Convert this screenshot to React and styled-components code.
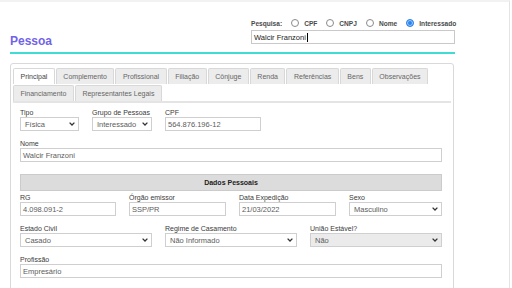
import React from 'react';
import styled, { createGlobalStyle } from 'styled-components';

const GlobalStyle = createGlobalStyle`
  html, body { margin: 0; padding: 0; background: #fff; }
  body { font-family: "Liberation Sans", Arial, sans-serif; color: #333; }
  *, *::before, *::after { box-sizing: border-box; }
`;

const Frame = styled.div`
  width: 510px;
  height: 288px;
  overflow: hidden;
  border-top: 2px solid #f2f2f2;
  border-right: 1px solid #e4e4e4;
  padding-left: 10px;
`;

const Content = styled.div`
  width: 445px;
`;

const Header = styled.header`
  display: flex;
  justify-content: space-between;
  align-items: flex-start;
  height: 52px;
  border-bottom: 2px solid #3fdcd6;
`;

const Title = styled.h1`
  align-self: flex-end;
  margin: 0 0 4px 0;
  font-size: 12px;
  line-height: 14px;
  font-weight: bold;
  color: #7163e8;
`;

const SearchBlock = styled.div`
  width: 204px;
  margin-top: 15px;
  display: flex;
  flex-direction: column;
  gap: 1px;
`;

const RadioRow = styled.div`
  display: flex;
  align-items: center;
  height: 12px;
  font-size: 6.6px;
  font-weight: bold;
  color: #4a4a4a;
`;

const RadioItem = styled.span`
  display: flex;
  align-items: center;
  gap: 5px;
  margin-left: 9px;
`;

const Circle = styled.span`
  width: 8px;
  height: 8px;
  border-radius: 50%;
  border: 1px solid ${p => (p.$checked ? '#2a83ef' : '#8a8a8a')};
  background: ${p => (p.$checked ? '#2a83ef' : '#fff')};
  box-shadow: ${p => (p.$checked ? 'inset 0 0 0 1px #a8cdf7' : 'none')};
`;

const SearchInput = styled.div`
  height: 14px;
  border: 1px solid #c9c9c9;
  padding-left: 2px;
  display: flex;
  align-items: center;
  font-size: 7.5px;
  color: #222;
`;

const Caret = styled.span`
  width: 1px;
  height: 9px;
  background: #000;
  margin-left: 1px;
`;

const Panel = styled.section`
  margin-top: 9px;
  width: 444px;
  min-height: 240px;
  border: 1px solid #d9d9d9;
  border-radius: 3px;
  padding: 4px 2px 0 2px;
`;

const TabStrip = styled.nav`
  display: flex;
  flex-wrap: wrap;
  row-gap: 1px;
  column-gap: 1px;
  border-bottom: 2px solid #e4e4e4;
`;

const Tab = styled.div`
  height: 16px;
  padding: 0 6.5px;
  display: flex;
  align-items: center;
  font-size: 7px;
  color: ${p => (p.$active ? '#444' : '#666')};
  background: ${p => (p.$active ? '#fff' : '#ececec')};
  border: 1px solid #d8d8d8;
  border-bottom: none;
  border-radius: 2px 2px 0 0;
  white-space: nowrap;
`;

const Form = styled.div`
  padding: 5px 9px 0 7px;
  display: flex;
  flex-direction: column;
`;

const Row = styled.div`
  display: grid;
  grid-template-columns: ${p => p.$cols};
  column-gap: 13px;
  margin-top: ${p => p.$mt || 0}px;
`;

const Field = styled.div`
  display: flex;
  flex-direction: column;
  min-width: 0;
`;

const Label = styled.label`
  font-size: 7px;
  line-height: 9px;
  height: 9px;
  color: #3a3a3a;
  white-space: nowrap;
`;

const Box = styled.div`
  height: 14px;
  border: 1px solid #cfcfcf;
  background: ${p => (p.$disabled ? '#ebebeb' : '#fff')};
  display: flex;
  align-items: center;
  justify-content: space-between;
  padding: 0 3px 0 ${p => (p.$select ? 4 : 2)}px;
  font-size: 7.5px;
  color: #5c5c5c;
  white-space: nowrap;
  overflow: hidden;
`;

const SectionHeader = styled.div`
  margin: 12px 0 2px 0;
  height: 17px;
  background: #dcdcdc;
  border: 1px solid #cbcbcb;
  display: flex;
  align-items: center;
  justify-content: center;
  font-size: 7px;
  font-weight: bold;
  color: #222;
`;

const Chevron = () => (
  <svg width="6" height="4" viewBox="0 0 6 4">
    <polyline points="0.6,0.6 3,3 5.4,0.6" fill="none" stroke="#333" strokeWidth="1.3" />
  </svg>
);

const Input = ({ value }) => <Box>{value}</Box>;
const Select = ({ value, disabled }) => (
  <Box $select $disabled={disabled}>
    <span>{value}</span>
    <Chevron />
  </Box>
);

const FieldGroup = ({ label, children }) => (
  <Field>
    <Label>{label}</Label>
    {children}
  </Field>
);

const tabs1 = ['Principal', 'Complemento', 'Profissional', 'Filiação', 'Cônjuge', 'Renda', 'Referências', 'Bens', 'Observações', 'Financiamento', 'Representantes Legais'];

export default function App() {
  return (
    <>
      <GlobalStyle />
      <Frame>
        <Content>
          <Header>
            <Title>Pessoa</Title>
            <SearchBlock>
              <RadioRow>
                <span>Pesquisa:</span>
                <RadioItem><Circle /> CPF</RadioItem>
                <RadioItem><Circle /> CNPJ</RadioItem>
                <RadioItem><Circle /> Nome</RadioItem>
                <RadioItem><Circle $checked /> Interessado</RadioItem>
              </RadioRow>
              <SearchInput>Walcir Franzoni<Caret /></SearchInput>
            </SearchBlock>
          </Header>
          <Panel>
            <TabStrip>
              {tabs1.map((t, i) => (
                <Tab key={t} $active={i === 0}>{t}</Tab>
              ))}
            </TabStrip>
            <Form>
              <Row $cols="59px 60px 96px">
                <FieldGroup label="Tipo"><Select value="Física" /></FieldGroup>
                <FieldGroup label="Grupo de Pessoas"><Select value="Interessado" /></FieldGroup>
                <FieldGroup label="CPF"><Input value="564.876.196-12" /></FieldGroup>
              </Row>
              <Row $cols="1fr" $mt={8}>
                <FieldGroup label="Nome"><Input value="Walcir Franzoni" /></FieldGroup>
              </Row>
              <SectionHeader>Dados Pessoais</SectionHeader>
              <Row $cols="96px 97px 97px 1fr">
                <FieldGroup label="RG"><Input value="4.098.091-2" /></FieldGroup>
                <FieldGroup label="Órgão emissor"><Input value="SSP/PR" /></FieldGroup>
                <FieldGroup label="Data Expedição"><Input value="21/03/2022" /></FieldGroup>
                <FieldGroup label="Sexo"><Select value="Masculino" /></FieldGroup>
              </Row>
              <Row $cols="1fr 1fr 1fr" $mt={8}>
                <FieldGroup label="Estado Civil"><Select value="Casado" /></FieldGroup>
                <FieldGroup label="Regime de Casamento"><Select value="Não Informado" /></FieldGroup>
                <FieldGroup label="União Estável?"><Select value="Não" disabled /></FieldGroup>
              </Row>
              <Row $cols="1fr" $mt={8}>
                <FieldGroup label="Profissão"><Input value="Empresário" /></FieldGroup>
              </Row>
            </Form>
          </Panel>
        </Content>
      </Frame>
    </>
  );
}
